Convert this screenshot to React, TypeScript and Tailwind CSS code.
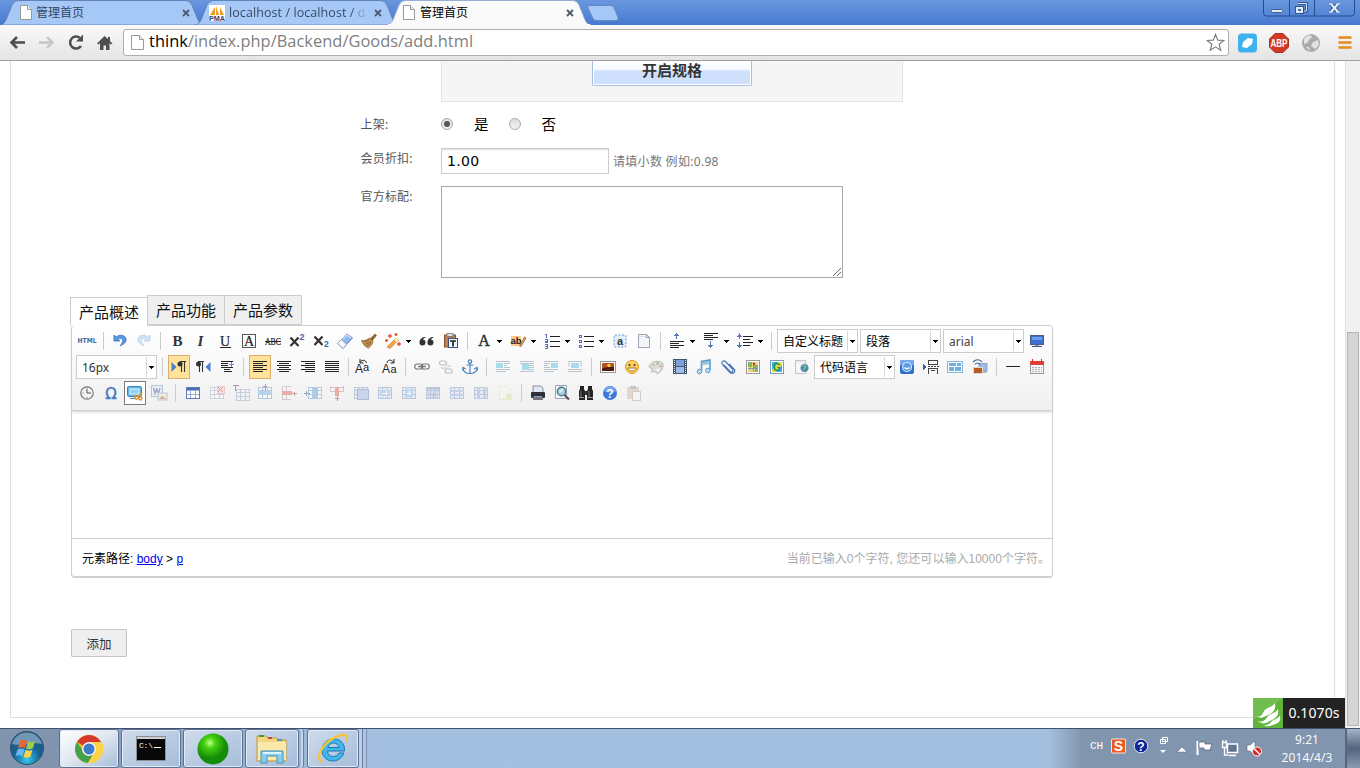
import React from "react";

type Kids = { children?: React.ReactNode };

const CJK = "font-['Noto_Sans','Noto_Sans_CJK_SC',sans-serif]";

/* ---------- toolbar glyphs, 20 x 20 ---------- */

function G({ children, faded, soft }: Kids & { faded?: boolean; soft?: boolean }) {
  return (
    <svg
      width="20"
      height="20"
      viewBox="0 0 20 20"
      fill="none"
      shapeRendering={soft ? "auto" : "crispEdges"}
      className={faded ? "shrink-0 opacity-50" : "shrink-0"}
    >
      {children}
    </svg>
  );
}

function Lines({ rows, color = "#222" }: { rows: [number, number, number][]; color?: string }) {
  return (
    <>
      {rows.map(([x, y, w], i) => (
        <rect key={i} x={x} y={y} width={w} height="1" fill={color} />
      ))}
    </>
  );
}

function Grid({ x = 3, y = 4, fill = "#fff", stroke = "#8a9cc6" }: { x?: number; y?: number; fill?: string; stroke?: string }) {
  return (
    <g>
      <rect x={x + 0.5} y={y + 0.5} width="13" height="11" fill={fill} stroke={stroke} />
      <path d={`M${x} ${y + 3.5}h14M${x} ${y + 7.5}h14M${x + 4.5} ${y}v12M${x + 9.5} ${y}v12`} stroke={stroke} />
    </g>
  );
}

const serif = "Liberation Serif, serif";
const sans = "Liberation Sans, sans-serif";

const icons: Record<string, React.ReactNode> = {
  html: (
    <G soft>
      <text x="0.500" y="12.300" fontFamily="DejaVu Sans, sans-serif" fontSize="7" fontWeight="700" fill="#47699c" textLength="19" lengthAdjust="spacingAndGlyphs">HTML</text>
    </G>
  ),
  undo: (
    <G soft>
      <path d="M4 4v6h6L7.8 8.2c2.300-2 5.600-.8 4.800 2.400-.3 1.600-1.400 2.800-2.600 4.100 4-1.200 6.400-3.900 6.100-6.500C15.600 4.100 9.800 3 6.200 6z" fill="#5a9be3" stroke="#2f6fc0" strokeWidth=".8" />
    </G>
  ),
  redo: (
    <G soft faded>
      <path d="M16 4v6h-6l2.200-1.800c-2.300-2-5.600-.8-4.800 2.400.3 1.600 1.400 2.800 2.600 4.100-4-1.200-6.400-3.900-6.100-6.500C4.400 4.100 10.200 3 13.800 6z" fill="#a9cbec" stroke="#6f9fce" strokeWidth=".8" />
    </G>
  ),
  bold: <G soft><text x="10.500" y="15" textAnchor="middle" fontFamily={serif} fontSize="15" fontWeight="700" fill="#333">B</text></G>,
  italic: <G soft><text x="9.500" y="15" textAnchor="middle" fontFamily={serif} fontSize="15" fontWeight="700" fontStyle="italic" fill="#333">I</text></G>,
  underline: (
    <G soft>
      <text x="10" y="14.500" textAnchor="middle" fontFamily={serif} fontSize="14" fill="#222" stroke="#222" strokeWidth=".2">U</text>
      <rect x="5" y="16" width="11" height="1" fill="#222" />
    </G>
  ),
  border: (
    <G soft>
      <rect x="3.500" y="3.500" width="13" height="13" stroke="#555" />
      <text x="10" y="15" textAnchor="middle" fontFamily={serif} fontSize="14" fill="#222" stroke="#222" strokeWidth=".2">A</text>
    </G>
  ),
  strike: (
    <G soft>
      <text x="2" y="14" fontFamily={serif} fontSize="10.500" fill="#222" stroke="#222" strokeWidth=".2" textLength="16" lengthAdjust="spacingAndGlyphs">ABC</text>
      <rect x="2" y="10" width="16" height="1" fill="#222" />
    </G>
  ),
  sup: (
    <G soft>
      <path d="M3.500 6.500l8 8.500M11.500 6.500l-8 8.500" stroke="#333" strokeWidth="2.200" />
      <text x="12.500" y="9" fontFamily={sans} fontSize="9" fontWeight="700" fill="#3d64a8">2</text>
    </G>
  ),
  sub: (
    <G soft>
      <path d="M3.500 5.500l8 8.500M11.500 5.500l-8 8.500" stroke="#333" strokeWidth="2.200" />
      <text x="13" y="16" fontFamily={sans} fontSize="8.500" fontWeight="700" fill="#3d64a8">2</text>
    </G>
  ),
  eraser: (
    <G soft>
      <path d="M2.500 12.500L12 3l5.500 4L8 17.500z" fill="#8eb7ec" stroke="#6686b8" />
      <path d="M2.500 12.500l4-4 5 5-3.500 4z" fill="#f6f8fb" stroke="#8f9db5" strokeWidth=".8" />
      <path d="M8 8l4-4 4 3" stroke="#d4e6fb" strokeWidth="1.200" />
    </G>
  ),
  broom: (
    <G soft>
      <path d="M11 8l5-5 1.500 1.300L13 10z" fill="#9a6933" stroke="#6e431d" strokeWidth=".6" />
      <path d="M2.500 9.500c4 1 6-1.500 8-2.500l3.500 3.500c-.5 3-2.500 5-4.500 6.500C6 16 3.500 12.500 2.500 9.500z" fill="#c59352" stroke="#835a2b" strokeWidth=".7" />
      <path d="M5 11l5-2M6.500 13l5-2M8 15l4-3" stroke="#774a20" strokeWidth=".7" />
    </G>
  ),
  wand: (
    <G soft>
      <path d="M4 16l9-9 2.500 2L7 17.500z" fill="#f7a441" stroke="#b36d22" strokeWidth=".6" />
      <path d="M11 9l2-2 2.500 2-2 2z" fill="#fff2bb" />
      <path d="M7 3v4M5 5h4M13 2v3M11.500 3.500h3M16 11v4M14 13h4M3.500 8v3M2 9.500h3" stroke="#e3502e" strokeWidth="1.300" />
    </G>
  ),
  quote: (
    <G soft>
      <path d="M9 6c-4 0-6.500 2-6.500 5.500A3 3 0 1 0 6 8.600C6.500 7.500 7.500 7 9 6zM17 6c-4 0-6.500 2-6.500 5.500A3 3 0 1 0 14 8.600C14.500 7.500 15.500 7 17 6z" fill="#333" />
    </G>
  ),
  pasteText: (
    <G soft>
      <rect x="3.500" y="4" width="11" height="12" fill="#b98254" stroke="#8b5430" />
      <rect x="6" y="2.500" width="6" height="3" fill="#ddd" stroke="#666" strokeWidth=".7" />
      <rect x="7.500" y="7.500" width="9" height="9" fill="#eef5ff" stroke="#3c5379" />
      <path d="M9 10h6M12 10v5.500" stroke="#222" strokeWidth="1.700" />
    </G>
  ),
  foreColor: <G soft><text x="10" y="14.500" textAnchor="middle" fontFamily={serif} fontSize="16" fill="#333" stroke="#333" strokeWidth=".5">A</text></G>,
  backColor: (
    <G soft>
      <rect x="3" y="5" width="10" height="10" fill="#ffc98b" />
      <text x="2.500" y="13" fontFamily={sans} fontSize="9.500" fontWeight="700" fill="#222">ab</text>
      <path d="M11.500 15l5-9 1.500 1-5 8.500z" fill="#e8a147" stroke="#725432" strokeWidth=".6" />
    </G>
  ),
  ol: (
    <G>
      <Lines rows={[[8, 5, 10], [8, 10, 10], [8, 15, 10]]} />
      <path d="M4.500 3v4M3 3.500h2M3 8.500h2v2h-2v1h3M3 13.500h2v4h-2M3 15.500h2" stroke="#5570cc" />
    </G>
  ),
  ul: (
    <G>
      <Lines rows={[[8, 5, 10], [8, 10, 10], [8, 15, 10]]} />
      <path d="M3.500 4.500h2v2h-2zM3.500 9.500h2v2h-2zM3.500 14.500h2v2h-2z" stroke="#5570cc" />
    </G>
  ),
  selectAll: (
    <G soft>
      <rect x="4" y="4" width="12" height="12" rx="1" fill="#e2eefb" stroke="#6f97d4" strokeDasharray="2 1.500" />
      <text x="10" y="13.500" textAnchor="middle" fontFamily={sans} fontSize="11" fontWeight="700" fill="#333">a</text>
    </G>
  ),
  page: (
    <G>
      <path d="M4.500 3.500h8l3 3v10h-11z" fill="#f4f5f8" stroke="#a0a5b3" />
      <path d="M12.500 3.500v3h3" stroke="#a0a5b3" />
      <path d="M5 5.500h7" stroke="#cfe0f3" />
    </G>
  ),
  rowTop: (
    <G>
      <Lines rows={[[3, 10, 14], [3, 12, 9], [3, 14, 14], [3, 16, 9]]} />
      <path d="M9.500 2v6M8 3.500h3M7 4.500h5" stroke="#5578b5" />
    </G>
  ),
  rowBottom: (
    <G>
      <Lines rows={[[3, 2, 14], [3, 4, 9], [3, 6, 14], [3, 8, 9]]} />
      <path d="M9.500 10v7M7 14.500h5M8 15.500h3" stroke="#5578b5" />
    </G>
  ),
  lineHeight: (
    <G>
      <Lines rows={[[8, 5, 10], [8, 8, 7], [8, 11, 10], [8, 14, 7]]} />
      <path d="M4.500 2v6M3 4.500h3M2 5.500h5M4.500 11v6M3 15.500h3M2 14.500h5" stroke="#5578b5" />
    </G>
  ),
  screen: (
    <G>
      <rect x="3.500" y="4.500" width="13" height="9" fill="#3d6fd0" stroke="#4a5e86" />
      <rect x="5" y="6" width="10" height="3" fill="#6f9bea" />
      <rect x="8" y="14" width="4" height="1" fill="#8898b8" />
      <rect x="5" y="15" width="10" height="1" fill="#44567d" />
    </G>
  ),
  ltr: (
    <G soft>
      <path d="M2.500 5l5 5-5 5z" fill="#4c80cf" />
      <path d="M11 4.500h6M12.500 5v10M15.500 5v10" stroke="#333" strokeWidth="1.100" />
      <circle cx="11" cy="7" r="2.500" fill="#333" />
    </G>
  ),
  rtl: (
    <G soft>
      <path d="M17.500 5l-5 5 5 5z" fill="#4c80cf" />
      <path d="M5 4.500h6M6.500 5v10M9.500 5v10" stroke="#333" strokeWidth="1.100" />
      <circle cx="5.500" cy="7" r="2.500" fill="#333" />
    </G>
  ),
  indent: (
    <G>
      <Lines rows={[[4, 4, 12], [4, 6, 7], [4, 8, 7], [4, 10, 12], [7, 12, 6], [7, 14, 8]]} />
      <path d="M12 7.500h5M14.500 5v5" stroke="#5b8ed7" />
    </G>
  ),
  left: <G><Lines rows={[[3, 4, 14], [3, 6, 10], [3, 8, 14], [3, 10, 10], [3, 12, 14], [3, 14, 10]]} /></G>,
  center: <G><Lines rows={[[3, 4, 14], [5, 6, 10], [3, 8, 14], [5, 10, 10], [3, 12, 14], [5, 14, 10]]} /></G>,
  right: <G><Lines rows={[[3, 4, 14], [7, 6, 10], [3, 8, 14], [7, 10, 10], [3, 12, 14], [7, 14, 10]]} /></G>,
  justify: <G><Lines rows={[[3, 4, 14], [3, 6, 14], [3, 8, 14], [3, 10, 14], [3, 12, 14], [3, 14, 14]]} /></G>,
  upper: (
    <G soft>
      <text x="0" y="16" fontFamily={sans} fontSize="12" fill="#222">A</text>
      <text x="8" y="14" fontFamily={sans} fontSize="11" fill="#222">a</text>
      <path d="M5 5.500c2-3.500 6-2.500 6.500.5M5 2v4h3.500" stroke="#222" />
    </G>
  ),
  lower: (
    <G soft>
      <text x="3" y="16" fontFamily={sans} fontSize="12" fill="#222">A</text>
      <text x="11.500" y="16" fontFamily={sans} fontSize="11" fill="#222">a</text>
      <path d="M8 6c.5-3.500 4.500-4 6.500-.5M15 2v4h-3.500" stroke="#222" />
    </G>
  ),
  link: (
    <G soft>
      <rect x="2.700" y="7" width="8" height="5" rx="2.500" stroke="#777" strokeWidth="1.200" />
      <rect x="9.300" y="7" width="8" height="5" rx="2.500" stroke="#777" strokeWidth="1.200" />
      <path d="M6 9.500h8" stroke="#777" strokeWidth="1.500" />
    </G>
  ),
  unlink: (
    <G soft faded>
      <rect x="3.500" y="4" width="7" height="4" rx="2" stroke="#888" strokeWidth="1.200" />
      <rect x="9" y="12" width="7" height="4" rx="2" stroke="#888" strokeWidth="1.200" />
      <path d="M7 11h4M11 9h4M5 10l2 2" stroke="#888" />
    </G>
  ),
  anchor: (
    <G soft>
      <circle cx="10" cy="4.500" r="1.700" stroke="#4b83bd" strokeWidth="1.200" />
      <path d="M10 6v10.500M6.500 8h7M3 11.500c.5 3.500 3 5 7 5s6.500-1.500 7-5M2.500 13.500L3 10.500l3 1.500M17.500 13.500L17 10.500l-3 1.500" stroke="#4b83bd" strokeWidth="1.200" />
    </G>
  ),
  imgLeft: <G><Lines color="#b9c4cf" rows={[[3, 4, 14], [11, 6, 6], [11, 8, 3], [11, 10, 6], [3, 12, 14], [3, 14, 10]]} /><rect x="3" y="6" width="7" height="5" fill="#a8dcea" /></G>,
  imgInline: <G><Lines color="#b9c4cf" rows={[[3, 4, 14], [3, 6, 14], [12, 8, 5], [12, 10, 5], [12, 12, 5], [3, 14, 14]]} /><rect x="5" y="7" width="7" height="6" fill="#a8dcea" /></G>,
  imgRight: <G><Lines color="#b9c4cf" rows={[[3, 4, 14], [3, 6, 6], [3, 8, 4], [3, 10, 6], [3, 12, 14], [3, 14, 10]]} /><rect x="10" y="6" width="7" height="5" fill="#a8dcea" /></G>,
  imgCenter: <G><Lines color="#b9c4cf" rows={[[3, 4, 14], [3, 6, 2], [15, 6, 2], [3, 8, 2], [15, 8, 2], [3, 12, 14], [3, 14, 14]]} /><rect x="6" y="6" width="8" height="5" fill="#a8dcea" /></G>,
  image: (
    <G soft>
      <rect x="2.500" y="4.500" width="15" height="11" fill="#fff" stroke="#999" />
      <rect x="4" y="6" width="12" height="8" fill="#b9531e" />
      <path d="M4 12c3-2 5-2 12-2v4H4z" fill="#4a2010" />
      <circle cx="11" cy="8.500" r="1.700" fill="#ffc64b" />
    </G>
  ),
  smile: (
    <G soft>
      <circle cx="10" cy="10" r="6.500" fill="#ffd65c" stroke="#d6921e" />
      <circle cx="7.500" cy="8" r="1.200" fill="#654" /><circle cx="12.500" cy="8" r="1.200" fill="#654" />
      <path d="M5.800 11h8.400c-.5 4-7.900 4-8.400 0z" fill="#fff" stroke="#995c18" strokeWidth=".9" />
    </G>
  ),
  palette: (
    <G soft>
      <path d="M3 9c3-5 10-6 13.500-3 2 4-1 9-5 10.500-2 0-1.500-2-3-2-2 0-2 1-3 .5-.5-1.500 1.500-2 1-3C5.500 11 3 11.500 3 9z" fill="#deded6" stroke="#a7a89d" strokeWidth=".8" />
      <circle cx="7.500" cy="8" r="1.200" fill="#bacb9b" /><circle cx="11.500" cy="6.500" r="1.200" fill="#9eb88b" /><circle cx="14.500" cy="9" r="1.200" fill="#d9a6a0" /><circle cx="12" cy="13" r="1.300" fill="#fff" />
    </G>
  ),
  film: (
    <G>
      <rect x="3" y="2" width="14" height="15" fill="#43546d" />
      <rect x="6" y="3" width="8" height="6" fill="#7ba0d8" /><rect x="6" y="10" width="8" height="6" fill="#9cbde9" />
      <path d="M4.500 3v13M15.500 3v13" stroke="#e8eef5" strokeDasharray="1 1" />
    </G>
  ),
  music: (
    <G soft>
      <path d="M7.500 14V4.500L16 3v10" stroke="#5e9bc9" strokeWidth="1.600" />
      <path d="M7.500 5.500L16 4v2.500L7.500 8z" fill="#9ccbec" stroke="#5e9bc9" strokeWidth=".5" />
      <circle cx="5.500" cy="14.500" r="2.300" fill="#b9dcf3" stroke="#5e9bc9" /><circle cx="13.800" cy="13.500" r="2.300" fill="#b9dcf3" stroke="#5e9bc9" />
    </G>
  ),
  clip: <G soft><path d="M6 8l6 6.500c2 1.500 4-.5 2.500-2.500L8 5C5.500 2.500 2.500 5 4.500 7.500l7 7.500c3 3 7 0 4.500-3L11 7" stroke="#4a74b9" strokeWidth="1.200" /></G>,
  map: (
    <G>
      <rect x="3.500" y="3.500" width="13" height="13" fill="#fff" stroke="#999" />
      <rect x="5" y="5" width="10" height="10" fill="#ecd27d" /><path d="M5 5h4v5H5zM11 8h4v7h-3z" fill="#86b465" /><path d="M10 5v10M5 11h10" stroke="#6d9fc6" />
      <rect x="10" y="6" width="2" height="2" fill="#b53d2e" />
    </G>
  ),
  gmap: (
    <G soft>
      <rect x="3.500" y="3.500" width="13" height="13" fill="#fff" stroke="#7d9ac1" />
      <rect x="5" y="5" width="10" height="10" fill="#e3dd37" /><path d="M5 5h6l-6 8zM15 8v7H9z" fill="#43aee3" />
      <text x="10" y="14" textAnchor="middle" fontFamily={sans} fontSize="10" fontWeight="700" fill="#178d5d">G</text>
    </G>
  ),
  frame: (
    <G soft>
      <path d="M4.500 3.500h10v13h-10z" fill="#f8f8fb" stroke="#c1c3cc" /><path d="M5 5h9" stroke="#dde8f5" />
      <circle cx="13.500" cy="11" r="3.700" fill="#438aad" stroke="#6a9cb4" /><path d="M11.500 9c2-1 3 0 3 1s-2 1-2 3" stroke="#8fca8a" strokeWidth="1.200" />
    </G>
  ),
  app: (
    <G soft>
      <rect x="3" y="3" width="14" height="14" rx="2" fill="#2f6fca" /><path d="M3 5a2 2 0 0 1 2-2h10a2 2 0 0 1 2 2v3H3z" fill="#74aaf0" />
      <circle cx="10" cy="10" r="4.500" fill="#5b9beb" stroke="#d7eaff" strokeWidth="1.200" /><path d="M7.500 10.500c1.500 1.500 3.500 1.500 5 0" stroke="#fff" strokeWidth="1.300" />
    </G>
  ),
  pageBreak: (
    <G>
      <path d="M7.500 4v3.500h9V4M16.500 17v-5.500h-9V17M7 3.500h10M10 13.500h4" stroke="#444" /><path d="M7 9.500h11" stroke="#444" strokeDasharray="2 1" /><path d="M2 7l4 3-4 3z" fill="#3e5d9c" />
    </G>
  ),
  template: (
    <G>
      <rect x="2.500" y="4.500" width="15" height="11" fill="#fff" stroke="#8eb4d8" />
      <path d="M4 6h7v3H4zM12 6h4v3h-4zM4 10h5v4H4zM10 10h6v4h-6z" fill="#6fb2e2" />
    </G>
  ),
  remote: (
    <G soft>
      <rect x="9" y="6.500" width="8" height="7" fill="#9dbbe6" stroke="#89a5ce" /><path d="M12 15h5" stroke="#8ea6cc" strokeWidth="1.500" />
      <rect x="3.500" y="10.500" width="9" height="6" fill="#b75b25" stroke="#e1d6ce" />
      <path d="M3 5c3-3 7-3 9 0M5 7.500c1.500-2 4-2 5 0" stroke="#405d9c" strokeWidth="1.200" />
    </G>
  ),
  hr: <G><rect x="3" y="9" width="14" height="1" fill="#222" /></G>,
  calendar: (
    <G>
      <rect x="3.500" y="4.500" width="13" height="12" fill="#f7f7f7" stroke="#9b9b9b" /><rect x="3" y="4" width="14" height="4" fill="#df4038" />
      <path d="M5.500 2v4M14.500 2v4" stroke="#c93630" /><path d="M5 10.500h10M5 12.500h10M5 14.500h10" stroke="#a9b3c1" strokeDasharray="2 1" />
    </G>
  ),
  clock: (
    <G soft>
      <circle cx="10" cy="10" r="6.200" fill="#f4f4f4" stroke="#777" strokeWidth="1.200" /><path d="M10 5.500V10h4" stroke="#555" /><path d="M5.500 10h1M10 14v1" stroke="#777" />
    </G>
  ),
  omega: <G soft><text x="10" y="15.500" textAnchor="middle" fontFamily="DejaVu Sans, sans-serif" fontSize="15" fill="#4d78c4" stroke="#4d78c4" strokeWidth=".5">Ω</text></G>,
  snap: (
    <G soft>
      <rect x="2.500" y="3.500" width="14" height="10" rx="1" fill="#62b7e4" stroke="#4281b8" /><rect x="5" y="6" width="9" height="5" stroke="#dff3ff" fill="#8fd1f2" /><path d="M5 15.500h6" stroke="#557fae" />
      <circle cx="11.500" cy="14.500" r="1.700" stroke="#dc8d22" strokeWidth="1.500" /><circle cx="15.500" cy="15.500" r="1.500" stroke="#dc8d22" strokeWidth="1.300" /><path d="M12.500 13.500l5-4" stroke="#e39a2f" strokeWidth="1.500" />
    </G>
  ),
  word: (
    <G soft faded>
      <rect x="2.500" y="2.500" width="11" height="11" fill="#e2eaf6" stroke="#7596c8" /><path d="M4.500 5l1.500 5.500L7.700 6l1.800 4.500L11 5" stroke="#335e9c" strokeWidth="1.300" />
      <rect x="9" y="10" width="9" height="7" fill="#efe1d0" stroke="#8593b2" /><path d="M10 16l3-3 4 3z" fill="#b4663e" />
    </G>
  ),
  table: (
    <G><Grid stroke="#9db1d6" /><rect x="3" y="4" width="14" height="3" fill="#4a70b8" /><rect x="3.500" y="4.500" width="13" height="11" stroke="#5e7cb5" /></G>
  ),
  tableDel: <G faded><Grid stroke="#aab0c4" /><path d="M10 3h7v7h-7z" fill="#f8d5d0" stroke="#df9a92" /><path d="M11 4l5 5M16 4l-5 5" stroke="#cf3f36" strokeWidth="1.300" /></G>,
  tableTitle: <G faded><Grid x={5} y={6} fill="#eef1f8" stroke="#9aa8c4" /><path d="M2 2.500h6M4.500 2v6" stroke="#444" /></G>,
  rowBefore: <G faded><Grid stroke="#7b9bd0" /><rect x="3" y="8" width="14" height="4" fill="#7fb4e6" /><path d="M10 1v6M8 3.500h4" stroke="#3a5685" /></G>,
  rowDel: <G faded><path d="M3.500 3.500h8M3.500 16.500h8M3.500 3v14M7.500 3v14" stroke="#b9a3ac" /><rect x="3" y="8" width="10" height="4" fill="#dc6961" /><path d="M13 10.500h5M15.500 8.500v4" stroke="#a55" /></G>,
  colBefore: <G faded><Grid x={5} stroke="#7b9bd0" /><rect x="9" y="4" width="5" height="12" fill="#6fa3db" /><path d="M1 10.500h6M3.500 8v5" stroke="#3a5685" /></G>,
  colDel: <G faded><path d="M3.500 3v6M3 8.500h14M16.500 3v6M3 4.500h14" stroke="#b9969e" /><rect x="8" y="4" width="4" height="9" fill="#dc6961" /><path d="M10 13v5M8 15.500h4" stroke="#944" /></G>,
  merge: <G faded><Grid fill="#dfe7f6" /><rect x="6" y="6" width="11" height="10" fill="#9db9e4" stroke="#6f86b8" /></G>,
  mergeR: <G faded><Grid fill="#dfe7f6" /><rect x="5" y="7" width="10" height="6" fill="#8fbbe7" /><path d="M7 10h6M11 8v4" stroke="#fff" /></G>,
  mergeD: <G faded><Grid fill="#dfe7f6" /><rect x="6" y="6" width="8" height="8" fill="#8fbbe7" /><path d="M10 7v5M8 10.500h4" stroke="#fff" /></G>,
  splitC: <G faded><Grid fill="#b3c9eb" /><path d="M3 5h14M10 10v6" stroke="#7488b8" /></G>,
  splitR: <G faded><Grid fill="#dfe7f6" /><path d="M3 7h14v2H3zM3 11h14v2H3z" fill="#8fb1e0" /></G>,
  splitK: <G faded><Grid fill="#dfe7f6" /><path d="M6 4h3v12H6zM12 4h3v12h-3z" fill="#8fb1e0" /></G>,
  chart: <G faded><path d="M4.500 3.500h7l3 3v10h-10z" fill="#f6f6ea" stroke="#dedfd4" /><path d="M11 11h6v6h-6z" fill="#e2e3ac" /></G>,
  print: (
    <G soft>
      <path d="M5 3h8l2 2v5H5z" fill="#dce9f4" stroke="#777" strokeWidth=".8" /><rect x="3" y="9" width="14" height="6" rx="1" fill="#2e3035" /><rect x="5" y="14" width="10" height="3" fill="#777" /><path d="M6 13.500h8" stroke="#7ba3cd" />
    </G>
  ),
  preview: (
    <G soft>
      <path d="M3.500 2.500h11v13h-11z" fill="#f7fafc" stroke="#9ba3ad" /><circle cx="9.500" cy="8.500" r="4.200" fill="#a7d3de" stroke="#52798b" strokeWidth="1.400" /><path d="M8 9l3-3" stroke="#e8f8fb" strokeWidth="1.500" /><path d="M12.500 12l4.500 4.500" stroke="#555" strokeWidth="2.200" />
    </G>
  ),
  find: (
    <G soft>
      <path d="M4 3h4v3l1 2v9H3V8l1-2zM12 3h4v3l1 2v9h-6V8l1-2z" fill="#242424" /><path d="M9 8h2v4H9z" fill="#333" /><path d="M5 8v7M13 8v7" stroke="#777" /><path d="M3 14.500h5M12 14.500h5" stroke="#999" />
    </G>
  ),
  help: (
    <G soft>
      <circle cx="10" cy="10" r="7" fill="#3e79da" /><path d="M4 8a6.200 6.200 0 0 1 12 0c-3 2-8 2-12 0z" fill="#75a4ef" />
      <text x="10" y="14.500" textAnchor="middle" fontFamily={sans} fontSize="12" fontWeight="700" fill="#fff">?</text>
    </G>
  ),
  drafts: <G faded><path d="M3 4h12v12H3z" fill="#d3bda8" /><path d="M6 3h6v3H6z" fill="#999" /><path d="M8.500 8.500h8v9h-8z" fill="#f7f5f3" stroke="#b2a9a2" /></G>,
};

/* ---------- editor toolbar ---------- */

function Caret() {
  return (
    <svg width="5" height="3" viewBox="0 0 5 3" shapeRendering="crispEdges">
      <path d="M0 0h5v1H0zM1 1h3v1H1zM2 2h1v1H2z" fill="#000" />
    </svg>
  );
}
function Sep() {
  return <span className="mx-1 h-[18px] w-px shrink-0 bg-[#ccc]" />;
}
function Tool({ name, on, frame }: { name: string; on?: boolean; frame?: boolean }) {
  const box = on
    ? "border-[#dcac6c] bg-[#ffe39a]"
    : frame
      ? "border-[#7c7c7c] bg-white"
      : "border-transparent";
  return (
    <span className={`mx-px flex h-6 w-[22px] shrink-0 items-center justify-center border ${box}`}>{icons[name]}</span>
  );
}
function Split({ name }: { name: string }) {
  return (
    <span className="flex w-[34px] shrink-0 items-center">
      <Tool name={name} />
      <span className="flex w-[7px] justify-center"><Caret /></span>
    </span>
  );
}
function Combo({ text, cls, latin }: { text: string; cls: string; latin?: string }) {
  return (
    <span className={`flex h-6 shrink-0 items-stretch border border-[#ccc] bg-white ${cls}`}>
      <span className={`flex-1 overflow-hidden pl-[5px] whitespace-nowrap ${latin ?? "text-[12px] leading-[24px] text-black"}`}>{text}</span>
      <span className="my-px flex w-[10px] items-center justify-center border-l border-[#d5d5d5]"><Caret /></span>
    </span>
  );
}
function Tools({ names }: { names: string[] }) {
  return <>{names.map((n) => <Tool key={n} name={n} />)}</>;
}

function EditorToolbar() {
  return (
    <div className="flex h-[85px] flex-col rounded-t-[3px] border-b border-[#cfcfcf] bg-gradient-to-b from-white to-[#f0f0f0] pt-[2px] pl-[3px] shadow-[0_1px_3px_#ccc]">
      <div className="flex h-[26px] items-center">
        <Tools names={["html"]} /><Sep /><Tools names={["undo", "redo"]} /><Sep />
        <Tools names={["bold", "italic", "underline", "border", "strike", "sup", "sub", "eraser", "broom"]} />
        <Split name="wand" /><Tools names={["quote", "pasteText"]} /><Sep />
        <Split name="foreColor" /><Split name="backColor" /><Split name="ol" /><Split name="ul" />
        <Tools names={["selectAll", "page"]} /><Sep />
        <Split name="rowTop" /><Split name="rowBottom" /><Split name="lineHeight" /><Sep />
        <Combo text="自定义标题" cls="ml-px w-[81px]" />
        <Combo text="段落" cls="ml-[2px] w-[81px]" />
        <Combo text="arial" cls="ml-[2px] w-[81px]" latin="text-[12px] leading-[23px] text-[#444]" />
        <span className="w-px" /><Tools names={["screen"]} />
      </div>
      <div className="flex h-[26px] items-center">
        <Combo text="16px" cls="ml-px mr-px w-[81px]" latin="text-[12px] leading-[23px] text-[#333]" /><Sep />
        <Tool name="ltr" on /><Tools names={["rtl", "indent"]} /><Sep />
        <Tool name="left" on /><Tools names={["center", "right", "justify"]} /><Sep />
        <Tools names={["upper", "lower"]} /><Sep />
        <Tools names={["link", "unlink", "anchor"]} /><Sep />
        <Tools names={["imgLeft", "imgInline", "imgRight", "imgCenter"]} /><Sep />
        <Tools names={["image", "smile", "palette", "film", "music", "clip"]} />
        <span className="w-px" /><Tools names={["map", "gmap", "frame"]} />
        <Combo text="代码语言" cls="ml-px w-[81px]" />
        <Tools names={["app", "pageBreak", "template"]} /><span className="w-px" /><Tools names={["remote"]} /><Sep /><Tools names={["hr", "calendar"]} />
      </div>
      <div className="flex h-[26px] items-center">
        <Tools names={["clock", "omega"]} /><Tool name="snap" frame /><Tools names={["word"]} /><Sep />
        <span className="w-px" />
        <Tools names={["table", "tableDel", "tableTitle", "rowBefore", "rowDel", "colBefore", "colDel", "merge", "mergeR", "mergeD", "splitC", "splitR", "splitK", "chart"]} /><Sep />
        <Tools names={["print", "preview", "find", "help", "drafts"]} />
      </div>
    </div>
  );
}

/* ---------- browser chrome ---------- */

function DocIcon() {
  return (
    <svg width="12" height="15" viewBox="0 0 12 15" className="shrink-0">
      <path d="M.5.500h7l4 4v10H.5z" fill="#fff" stroke="#999" /><path d="M7.500.500v4h4" fill="#eee" stroke="#999" />
    </svg>
  );
}
function Close() {
  return <svg width="8" height="8" viewBox="0 0 8 8" className="shrink-0"><path d="M1 1l6 6M7 1L1 7" stroke="#4d5a6b" strokeWidth="1.800" /></svg>;
}
function TabShape({ active }: { active?: boolean }) {
  return (
    <svg width="204" height="25" viewBox="0 0 204 25" className="absolute inset-0">
      <path d="M0 25C5 24 6 20 8 15l4-10q2-4.500 6-4.500h168q4 0 6 4.500l4 10c2 5 3 9 8 10z" fill={active ? "#fafafa" : "#a6c8f7"} stroke={active ? "#91a9cf" : "#5877ad"} strokeWidth=".8" />
      {active && <rect x="1" y="24" width="202" height="1" fill="#fafafa" />}
    </svg>
  );
}

function TitleBar() {
  return (
    <div className="flex h-[25px] bg-gradient-to-b from-[#6997de] to-[#4879d0]">
      <div className="relative h-[25px] w-[195px]">
        <TabShape />
        <div className="relative flex h-[25px] items-center pl-5">
          <DocIcon /><span className="ml-1 flex-1 text-[12px] text-[#34465f]">管理首页</span><span className="mr-[5px] flex"><Close /></span>
        </div>
      </div>
      <div className="relative h-[25px] w-[192px]">
        <TabShape />
        <div className="relative flex h-[25px] items-center pl-[14px]">
          <svg width="16" height="16" viewBox="0 0 16 16" className="shrink-0">
            <rect width="16" height="16" fill="#fff" /><path d="M1 10L6 2v8zM7 10V1l3 9zM11 10V2l4 8z" fill="#f39b21" />
            <text x="0" y="16" fontFamily={sans} fontSize="6.500" fontWeight="700" fill="#35406b" textLength="16" lengthAdjust="spacingAndGlyphs">PMA</text>
          </svg>
          <span className="ml-1 w-[138px] overflow-hidden bg-gradient-to-r from-[#34465f] from-88% to-transparent bg-clip-text pt-px font-['Open_Sans'] text-[12.500px] tracking-[0.08px] whitespace-nowrap text-transparent">localhost / localhost / d</span>
          <span className="ml-[7px] flex"><Close /></span>
        </div>
      </div>
      <div className="relative h-[25px] w-[201px]">
        <TabShape active />
        <div className="relative flex h-[25px] items-center pl-4">
          <DocIcon /><span className="ml-[5px] flex-1 text-[12px] text-black">管理首页</span><span className="mr-[14px] flex"><Close /></span>
        </div>
      </div>
      <svg width="32" height="25" viewBox="0 0 32 25" className="-ml-px"><path d="M3 5.500h21q2 0 3 2l4 10q1 3-2 3H9q-2 0-3-2L1 8q-1-2.500 2-2.500z" fill="#a6c8f7" stroke="#6589c4" /></svg>
      <svg width="94" height="17" viewBox="0 0 94 17" className="mr-[4px] ml-auto" fill="none">
        <path d="M1.500 0v13q0 3 3 3h85q3 0 3-3V0M27.500 0v16M52.500 0v16" stroke="#294c8e" />
        <rect x="9.500" y="9.500" width="11" height="3" rx="1" fill="#dfebfb" stroke="#425f91" />
        <path d="M36 3.500h8.500V11H42" stroke="#31548d" strokeWidth="3" /><path d="M36 3.500h8.500V11H42" stroke="#dfebfb" />
        <rect x="33.500" y="6.500" width="8" height="7" fill="#dfebfb" stroke="#31548d" /><rect x="36" y="9" width="3" height="2" fill="#466fae" />
        <path d="M69 4l7 8M76 4l-7 8" stroke="#31548d" strokeWidth="4" /><path d="M69 4l7 8M76 4l-7 8" stroke="#e4eefc" strokeWidth="2" /><path d="M67 4h4M74 4h4M67 12h4M74 12h4" stroke="#e4eefc" />
      </svg>
    </div>
  );
}

function NavBar() {
  return (
    <div className="flex h-9 items-center border-b border-[#a0a0a0] bg-gradient-to-b from-[#fafafa] to-[#e4e4e4] pl-[9px]">
      <svg width="106" height="20" viewBox="0 0 106 20" fill="none" className="shrink-0">
        <path d="M16 9.500H3M8 4L2.500 9.500 8 15" stroke="#4e4e4e" strokeWidth="2.600" />
        <path d="M30 9.500h13M38 4l5.500 5.500L38 15" stroke="#c5c5c5" strokeWidth="2.400" />
        <path d="M72 13a6 6 0 1 1-1.200-8.200" stroke="#4e4e4e" strokeWidth="2.500" /><path d="M74 1.500v7h-7z" fill="#4e4e4e" />
        <path d="M95.500 3L88 10.500l1.500 1L91 10v7h3.500v-4.500h2.500V17h3.500v-7l1.500 1.500 1.500-1-2.500-2.500V4h-2v2z" fill="#4e4e4e" />
      </svg>
      <div className="ml-2 flex h-[27px] w-[1106px] items-center rounded-[3px] border border-[#aeaeae] bg-white pl-[7px]">
        <svg width="13" height="17" viewBox="0 0 13 17" className="shrink-0"><path d="M.5 1.500h8l4 4v10H.5z" fill="#fff" stroke="#999" /><path d="M8.500 1.500v4h4" fill="#eee" stroke="#999" /></svg>
        <span className="-mt-[2px] ml-[5px] flex-1 font-['Open_Sans'] text-[16.400px] tracking-[0.035px] text-[#808080]"><span className="text-black">think</span>/index.php/Backend/Goods/add.html</span>
        <svg width="19" height="19" viewBox="0 0 20 20" className="mr-[3px]"><path d="M10 1.500l2.400 6 6.400.3-5 4 1.700 6.400L10 14.600l-5.500 3.600 1.700-6.400-5-4 6.400-.3z" fill="#fff" stroke="#7b7b7b" strokeWidth="1.200" /></svg>
      </div>
      <svg width="118" height="22" viewBox="0 0 118 22" className="ml-[8px]">
        <rect x="1" y="1.500" width="19" height="19" rx="3.500" fill="#3fb1ec" /><path d="M5 15l1-5 5-4 5 1-1 5-5 4z" fill="#fff" />
        <path d="M38 1.500h8l5.500 5.500v8L46 20.500h-8L32.500 15V7z" fill="#d33821" stroke="#a63023" /><text x="33.500" y="15" fontFamily={sans} fontSize="10" fontWeight="700" fill="#fff" textLength="17" lengthAdjust="spacingAndGlyphs">ABP</text>
        <circle cx="74" cy="11" r="9" fill="#aaa" /><path d="M67 7c3-5 7-4 8-2l-3 3-2 3-3 1zM76 10l5-2c2 4 0 7-3 9l-4-3zM69 15l3 0 1 4z" fill="#e2e2e2" />
        <path d="M101.500 5.500h13M101.500 10.500h13M101.500 15.500h13" stroke="#e58a1b" strokeWidth="2.500" />
      </svg>
    </div>
  );
}

/* ---------- page ---------- */

function Label({ children }: Kids) {
  return <span className="w-[81px] shrink-0 pl-[0.500px] text-[12px] leading-[18px] tracking-[0.200px] text-[#555]">{children}</span>;
}
function Radio({ checked }: { checked?: boolean }) {
  return (
    <span className="-mt-px flex size-3 items-center justify-center rounded-full border border-[#aaa] bg-gradient-to-b from-[#ddd] to-[#f2f2f2]">
      {checked && <span className="size-[6px] rounded-full bg-[#555]" />}
    </span>
  );
}

function GoodsForm() {
  return (
    <div className="pl-[349px]">
      <div className="ml-[81px] flex h-[41px] w-[462px] justify-center border-x border-b border-[#e4e4e4] bg-[#f5f5f5]">
        <div className="h-[25px] w-[160px] rounded-b-[2px] border border-t-0 border-[#a6bfe3] bg-gradient-to-b from-white from-0% via-[#f3f7ff] via-38% to-[#cfe0fd] to-40% text-center text-[15px] leading-[18px] font-bold text-[#333] shadow-[inset_0_0_0_1px_#fff]">开启规格</div>
      </div>
      <div className="flex h-[45px] items-center">
        <Label>上架:</Label>
        <Radio checked /><span className="ml-[21px] pt-px text-[14.500px] text-black">是</span>
        <span className="ml-[20px]"><Radio /></span><span className="ml-[21px] pt-px text-[14.500px] text-black">否</span>
      </div>
      <div className="flex h-[39px] pt-px">
        <Label><span className="block pt-[2px]">会员折扣:</span></Label>
        <span className="h-[26px] w-[168px] border border-[#ccc] pl-[5px] font-['DejaVu_Sans'] text-[14px] leading-[25px] text-black shadow-[inset_0_1px_1px_#ddd]"><span className="tracking-[0.300px]">1.00</span></span>
        <span className="ml-1 text-[12px] leading-[28px] tracking-[0.300px] text-[#777]">请填小数 例如:0.98</span>
      </div>
      <div className="flex h-[92px]">
        <Label><span className="block pt-[2px]">官方标配:</span></Label>
        <div className="flex h-[92px] w-[402px] items-end justify-end border border-[#a9a9a9] bg-white">
          <svg width="10" height="10" viewBox="0 0 10 10"><path d="M1 9l8-8M5 9l4-4" stroke="#666" /></svg>
        </div>
      </div>
    </div>
  );
}

function Editor() {
  return (
    <div className="w-[982px]">
      <div className="flex h-[30px] items-end text-[15px] text-[#111]">
        <span className="relative -mb-px -ml-px h-[29px] w-[78px] border border-b-0 border-[#ccc] bg-white text-center leading-[29px]">产品概述</span>
        <span className="-ml-px h-[30px] w-[78px] border border-[#ccc] bg-[#efefef] text-center leading-[29px]">产品功能</span>
        <span className="-ml-px h-[30px] w-[78px] border border-[#ccc] bg-[#efefef] text-center leading-[29px]">产品参数</span>
      </div>
      <div className="h-[253px] rounded-[4px] border border-b-2 border-[#d0d0d0] bg-white">
        <EditorToolbar />
        <div className="h-[127px]" />
        <div className="flex h-[38px] items-center justify-between border-t border-[#ccc] pt-[3px] pr-[2px] pl-[10px] text-[12px]">
          <span className="font-['Liberation_Sans','Noto_Sans_CJK_SC',sans-serif] text-black">元素路径: <a className="text-[#00e] underline">body</a> &gt; <a className="text-[#00e] underline">p</a></span>
          <span className="font-['Liberation_Sans','Noto_Sans_CJK_SC',sans-serif] tracking-[0.020px] text-[#aaa]">当前已输入0个字符, 您还可以输入10000个字符。</span>
        </div>
      </div>
    </div>
  );
}

function Page() {
  return (
    <div className="relative flex h-[667px] bg-white">
      <div className="ml-[10px] h-[657px] w-[1325px] border-x border-b border-[#ddd]">
        <GoodsForm />
        <div className="mt-[17px] pl-[60px]">
          <Editor />
          <div className="mt-[51px] h-[28px] w-[56px] rounded-[1px] border border-[#c4c4c4] bg-[#efefef] text-center text-[12.500px] leading-[29px] text-[#333]">添加</div>
        </div>
      </div>
      <div className="ml-auto flex w-[15px] flex-col items-center border-l border-[#e0e0e0] bg-[#f1f1f1] pt-[271px]">
        <div className="h-[394px] w-[12px] border border-[#b5b5b5] bg-[#d5d5d5]" />
      </div>
      <div className="absolute right-[15px] bottom-0 flex h-[30px] w-[92px] bg-[#232323]">
        <svg width="30" height="30" viewBox="0 0 30 30">
          <rect width="30" height="30" fill="#60b33b" /><path d="M0 0h30L0 22z" fill="#73bd50" />
          <path d="M2 18c5 2 7-1 9-5 3-4 8-3 11-8 1 6-1 9-5 11-5 2-7 6-15 2zM4 23c6 2 8-1 11-5 3-3 8-3 10-7 1 6-1 8-6 11-5 2-7 6-15 1zM10 27c5 1 7-2 9-4 3-2 7-3 8-6 1 6-1 8-5 9-3 1-6 4-12 1z" fill="#fff" />
        </svg>
        <span className="flex-1 text-center font-['Noto_Sans'] text-[14px] leading-[29px] tracking-[0.100px] text-white">0.1070s</span>
      </div>
    </div>
  );
}

/* ---------- taskbar ---------- */

function TaskButton({ children, cls }: Kids & { cls: string }) {
  return (
    <div className={`flex h-[39px] items-center justify-center rounded-[3px] border border-[#5c7093] bg-gradient-to-br from-[#d0dcec] to-[#a5bcd9] shadow-[inset_0_0_0_1px_#e1ebf7] ${cls}`}>
      {children}
    </div>
  );
}

function TaskBar() {
  return (
    <div className="flex h-10 items-start border-t border-[#3f516c] bg-gradient-to-r from-[#8194ae] from-0% via-[#a4c0e1] via-28% to-[#a4c0e1] to-100%">
      <svg width="59" height="39" viewBox="0 0 59 39" className="shrink-0">
        <defs><radialGradient id="orb" cx=".5" cy=".85" r=".9"><stop offset="0" stopColor="#35c7ee" /><stop offset=".45" stopColor="#176394" /><stop offset="1" stopColor="#254f75" /></radialGradient></defs>
        <rect width="59" height="39" fill="#8194ae" />
        <circle cx="27" cy="19" r="16.500" fill="url(#orb)" stroke="#314f6e" /><path d="M12 15a15.500 15.500 0 0 1 30 0c-9-3-20 3-30 0z" fill="#a9c3d8" opacity=".6" />
        <path d="M20 12c3-2 5-1 7 0l-2 7c-2-1-4-1-7 0z" fill="#ec6537" /><path d="M28 12.500c3 1 5 1 7-.5l-2 7c-2 1.500-5 1.500-7 .5z" fill="#a0ce48" />
        <path d="M17.500 20.500c3-1.500 5-1 7 0l-2 6.500c-2-1-4-1-7 0z" fill="#69b7eb" /><path d="M25.500 21c3 1 5 1 7-.5l-2 7c-2 1.500-5 1.500-7 .5z" fill="#fbd24a" />
      </svg>
      <TaskButton cls="w-[60px] from-white via-[#dfe6ef]">
        <svg width="30" height="30" viewBox="0 0 30 30"><circle cx="15" cy="15" r="14" fill="#e8b928" /><path d="M15 15L2.900 8A14 14 0 0 1 27.100 8z" fill="#d9392c" /><path d="M2.900 8A14 14 0 0 0 14 29l6-10-11-2z" fill="#45a149" /><path d="M15 8h12.200A14 14 0 0 1 14 29l7-12z" fill="#fbd344" /><circle cx="15" cy="15" r="7" fill="#f4f4f4" /><circle cx="15" cy="15" r="5.500" fill="#3c7cc8" /></svg>
      </TaskButton>
      <TaskButton cls="ml-[2px] w-[60px]">
        <svg width="30" height="25" viewBox="0 0 30 25"><rect x=".5" y=".5" width="29" height="24" fill="#080808" stroke="#8d9092" /><rect x="1" y="1" width="28" height="2" fill="#ccd0d2" /><text x="3" y="12" fontFamily="Liberation Mono, monospace" fontSize="8" fill="#fff" textLength="14">C:\</text><path d="M18 11.500h7" stroke="#fff" /></svg>
      </TaskButton>
      <TaskButton cls="ml-[2px] w-[60px]">
        <svg width="32" height="32" viewBox="0 0 32 32"><defs><radialGradient id="ball" cx=".4" cy=".3"><stop offset="0" stopColor="#c6ff8d" /><stop offset=".35" stopColor="#46d312" /><stop offset="1" stopColor="#168d09" /></radialGradient></defs><circle cx="16" cy="16" r="15.500" fill="url(#ball)" /></svg>
      </TaskButton>
      <TaskButton cls="ml-[2px] w-[54px]">
        <svg width="32" height="30" viewBox="0 0 32 30"><path d="M1 2h9l2 2h9l2 2h7v21H1z" fill="#f4d77d" stroke="#c39a40" /><path d="M2 8h28v18H2z" fill="#fae9a8" /><path d="M3 2h5" stroke="#379c45" strokeWidth="2" /><path d="M12 4h4" stroke="#c9463a" strokeWidth="2" /><path d="M21 6h5" stroke="#4b95cd" strokeWidth="2" /><path d="M5 29V17h22v12h-6v-7H11v7z" fill="#84cdee" stroke="#498eb9" /><path d="M7 19h18" stroke="#dff5ff" strokeWidth="2" /></svg>
      </TaskButton>
      <span className="h-[39px] w-[5px] rounded-r-[3px] border-r border-[#6880a3] shadow-[inset_-2px_0_0_#c5d5ea]" />
      <TaskButton cls="ml-[3px] w-[52px]">
        <svg width="32" height="32" viewBox="0 0 32 32" fill="none"><path d="M27 20c-2 5-6 8-11 8C9 28 5 23 5 17S10 6 16.500 6C24 6 28 11 27.500 18H10.500c.5 7 9 7 11.500 2zM11 14.500h11c-1-6-10-6-11 0z" fill="#42b5eb" stroke="#1877b5" fillRule="evenodd" /><path d="M4 29C-3 23 9 5 25 2c5-1 6 2 4 6" stroke="#f3c43d" strokeWidth="2.500" /></svg>
      </TaskButton>
      <span className="h-[39px] w-[4px] border-r border-[#6880a3] bg-[#bdcfe6]" />
      <span className="h-[39px] w-[4px] border-r border-[#7d94b6] bg-[#b1c5df]" />
      <div className="ml-auto flex h-[39px] w-[312px] shrink-0 items-center bg-gradient-to-r from-transparent to-[#8295ae] to-11% pl-[42px] text-white">
        <span className="w-[20px] pb-1 font-['Liberation_Mono'] text-[11px]">CH</span>
        <svg width="156" height="39" viewBox="0 0 156 39" fill="none">
          <rect x="1.500" y="10" width="14" height="14" rx="1" fill="#ea5b23" stroke="#fff" strokeWidth=".8" /><text x="8.500" y="22" textAnchor="middle" fontFamily={sans} fontSize="14" fontWeight="700" fill="#fff">S</text>
          <circle cx="31" cy="17" r="6.800" fill="#0e2597" stroke="#e0e6f4" /><text x="31" y="21.500" textAnchor="middle" fontFamily={sans} fontSize="12" fontWeight="700" fill="#fff">?</text>
          <path d="M52.500 8.500h5v4h-5zM50.500 10.500h5v4h-5z" fill="#8295ae" stroke="#fff" /><path d="M50 21h6l-3 3z" fill="#fff" />
          <path d="M67 23l5-5 5 5z" fill="#fff" stroke="#59677c" strokeWidth=".5" />
          <path d="M87.500 12v14" stroke="#fff" strokeWidth="2" /><path d="M89 13h6v2h7l-2 6h-6v-2h-5z" fill="#fff" stroke="#485970" strokeWidth=".7" />
          <path d="M117.500 15h10v8.500h-10z" fill="#60758f" stroke="#fff" strokeWidth="1.500" /><path d="M119 26.500h7M112.500 13.500h4v5h-4zM113 11v3M116 11v3M114.500 18v8h4" stroke="#fff" strokeWidth="1.300" />
          <path d="M137 16h3l5-4v15l-5-5h-3z" fill="#fff" stroke="#59677c" strokeWidth=".6" /><circle cx="147" cy="22.500" r="4.500" fill="#d92724" stroke="#fff" /><path d="M144 19.500l6 6" stroke="#fff" strokeWidth="1.500" />
        </svg>
        <div className="ml-[3px] w-[76px] text-center font-['Open_Sans'] text-[12px] leading-[18px] tracking-[0.100px]"><div>9:21</div><div>2014/4/3</div></div>
        <span className="ml-auto h-[39px] w-[15px] shrink-0 border-l-2 border-[#56677f] bg-gradient-to-b from-[#a5b3c5] via-[#53647e] to-[#8b9bb1]" />
      </div>
    </div>
  );
}

export default function App() {
  return (
    <div className={`h-[768px] w-[1360px] overflow-hidden bg-white ${CJK}`}>
      <TitleBar />
      <NavBar />
      <Page />
      <TaskBar />
    </div>
  );
}
